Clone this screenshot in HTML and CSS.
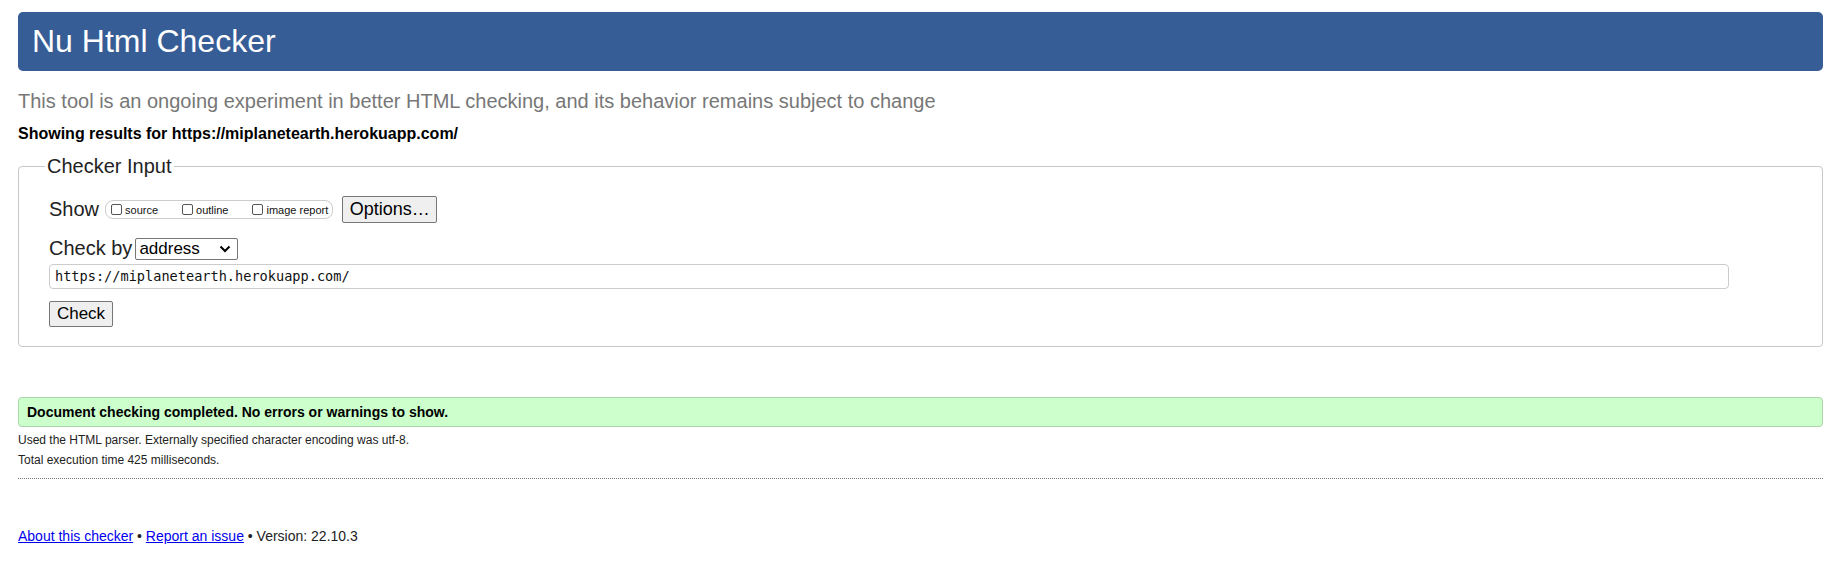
FILE: index.html
```html
<!DOCTYPE html>
<html lang="en">
<head>
<meta charset="utf-8">
<title>Showing results for https://miplanetearth.herokuapp.com/ - Nu Html Checker</title>
<link rel="stylesheet" href="styles.css">
</head>
<body>
<h1 class="title">Nu Html Checker</h1>
<p class="subtitle">This tool is an ongoing experiment in better HTML checking, and its behavior remains subject to change</p>
<p class="showing">Showing results for https://miplanetearth.herokuapp.com/</p>
<form class="checker">
  <fieldset class="inputs">
    <legend class="legend">Checker Input</legend>
    <div class="row show-row">
      <span class="label">Show</span>
      <span class="opts">
        <label class="opt"><span class="cb"></span>source</label>
        <label class="opt"><span class="cb"></span>outline</label>
        <label class="opt last"><span class="cb"></span>image report</label>
      </span>
      <span class="btn options">Options…</span>
    </div>
    <div class="row by-row">
      <span class="label">Check by</span>
      <span class="select">address<svg class="chev" width="12" height="8" viewBox="0 0 12 8"><path d="M1.5 1.5 L6 6 L10.5 1.5" fill="none" stroke="#000" stroke-width="2"/></svg></span>
    </div>
    <div class="url">https://miplanetearth.herokuapp.com/</div>
    <div class="row"><span class="btn check">Check</span></div>
  </fieldset>
</form>
<div class="result">Document checking completed. No errors or warnings to show.</div>
<p class="meta">Used the HTML parser. Externally specified character encoding was utf-8.</p>
<p class="meta">Total execution time 425 milliseconds.</p>
<hr class="rule">
<p class="footer"><a href="#" class="link">About this checker</a> • <a href="#" class="link">Report an issue</a> • Version: 22.10.3</p>
</body>
</html>
```
FILE: styles.css
```css
html, body { background: #fff; }
body {
  margin: 0;
  padding: 12px 8px 0 18px;
  font-family: "Liberation Sans", Arial, sans-serif;
  color: #000;
}
.title {
  margin: 0;
  height: 59px;
  line-height: 59px;
  padding-left: 14px;
  font-size: 32px;
  font-weight: normal;
  color: #fff;
  background: #365d96;
  border-radius: 5px;
}
.subtitle {
  margin: 0;
  padding-top: 17px;
  font-size: 20px;
  line-height: 26px;
  color: #777;
}
.showing {
  margin: 0;
  padding-top: 10px;
  font-size: 16px;
  line-height: 20px;
  font-weight: bold;
}
.checker { margin: 0; padding-top: 11px; }
.inputs {
  margin: 0;
  border: 1px solid #c8c8c8;
  border-radius: 4px;
  padding: 18px 0 19px 30px;
  min-width: 0;
}
.legend {
  font-size: 20px;
  padding: 0 2px;
  margin-left: -4px;
  color: #222;
}
.row { display: flex; align-items: center; }
.label { font-size: 20px; color: #222; }
.show-row { height: 27px; }
.opts {
  display: inline-flex;
  align-items: center;
  margin-left: 6px;
  height: 17px;
  border: 1px solid #ccc;
  border-radius: 8px;
  padding: 0 4px 0 5px;
  font-size: 11px;
  color: #111;
}
.opt { display: inline-flex; align-items: center; margin-right: 24px; }
.opt.last { margin-right: 0; }
.cb {
  width: 11px; height: 11px;
  border: 1px solid #555;
  border-radius: 2px;
  margin-right: 3px;
  box-sizing: border-box;
}
.btn {
  display: inline-flex;
  align-items: center;
  justify-content: center;
  box-sizing: border-box;
  border: 1px solid #767676;
  border-radius: 2px;
  background: #efefef;
  color: #000;
}
.options { margin-left: 9px; width: 95px; height: 27px; font-size: 18px; }
.by-row { margin-top: 14px; }
.select {
  display: inline-flex;
  align-items: center;
  justify-content: space-between;
  margin-left: 3px;
  width: 103px; height: 22px;
  box-sizing: border-box;
  border: 1px solid #767676;
  border-radius: 2px;
  padding: 0 6px 0 3px;
  font-size: 17px;
}
.url {
  margin-top: 4px;
  width: 1680px;
  height: 25px;
  box-sizing: border-box;
  border: 1px solid #ccc;
  border-radius: 4px;
  padding: 0 5px;
  font-family: "DejaVu Sans Mono", "Liberation Mono", monospace;
  font-size: 13.6px;
  line-height: 23px;
  color: #111;
}
.check { margin-top: 12px; width: 64px; height: 26px; font-size: 17px; }
.result {
  margin-top: 50px;
  height: 30px;
  box-sizing: border-box;
  border: 1px solid #a9d5a9;
  border-radius: 4px;
  background: #ccffcc;
  padding-left: 8px;
  font-size: 14px;
  font-weight: bold;
  line-height: 28px;
}
.meta {
  margin: 0;
  font-size: 12px;
  line-height: 20px;
  color: #222;
}
.result + .meta { margin-top: 3px; }
.rule {
  margin: 8px 0 0;
  border: 0;
  border-top: 1px dotted #777;
  height: 0;
}
.footer {
  margin: 49px 0 0;
  font-size: 14px;
  color: #222;
}
.link { color: #0000ee; }
```
